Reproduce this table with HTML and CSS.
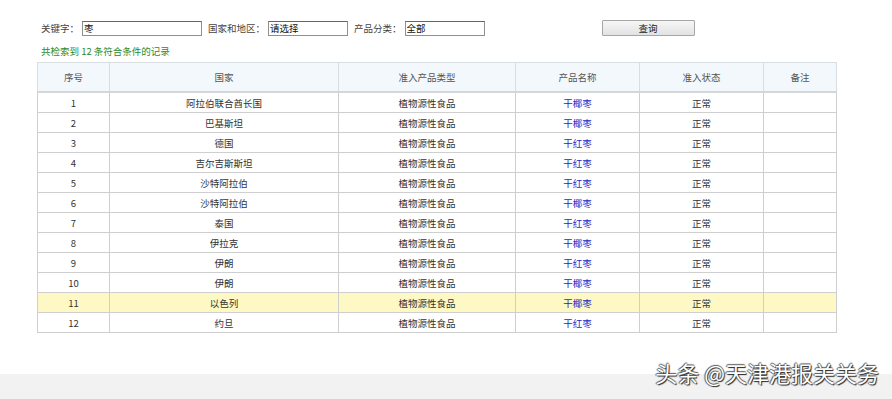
FILE: index.html
```html
<!DOCTYPE html>
<html lang="zh-CN">
  <head>
    <meta charset="UTF-8" />
    <title>准入产品查询</title>
    <link rel="stylesheet" href="styles.css">
  </head>
  <body>
    <div class="page">
      <div class="search-bar">
        <label>关键字：</label>
        <input class="field field-key" type="text" value="枣" />
        <label>国家和地区：</label>
        <input class="field" type="text" value="请选择" />
        <label>产品分类：</label>
        <input class="field" type="text" value="全部" />
        <button class="search-button">查询</button>
      </div>
      <div class="summary">共检索到 12 条符合条件的记录</div>

      <table class="result-table">
        <thead>
          <tr>
            <th class="col-no">序号</th>
            <th class="col-country">国家</th>
            <th class="col-type">准入产品类型</th>
            <th class="col-name">产品名称</th>
            <th class="col-state">准入状态</th>
            <th class="col-note">备注</th>
          </tr>
        </thead>
        <tbody>
          <tr><td>1</td><td>阿拉伯联合酋长国</td><td>植物源性食品</td><td><a href="#">干椰枣</a></td><td>正常</td><td></td></tr>
          <tr><td>2</td><td>巴基斯坦</td><td>植物源性食品</td><td><a href="#">干椰枣</a></td><td>正常</td><td></td></tr>
          <tr><td>3</td><td>德国</td><td>植物源性食品</td><td><a href="#">干红枣</a></td><td>正常</td><td></td></tr>
          <tr><td>4</td><td>吉尔吉斯斯坦</td><td>植物源性食品</td><td><a href="#">干红枣</a></td><td>正常</td><td></td></tr>
          <tr><td>5</td><td>沙特阿拉伯</td><td>植物源性食品</td><td><a href="#">干红枣</a></td><td>正常</td><td></td></tr>
          <tr><td>6</td><td>沙特阿拉伯</td><td>植物源性食品</td><td><a href="#">干椰枣</a></td><td>正常</td><td></td></tr>
          <tr><td>7</td><td>泰国</td><td>植物源性食品</td><td><a href="#">干红枣</a></td><td>正常</td><td></td></tr>
          <tr><td>8</td><td>伊拉克</td><td>植物源性食品</td><td><a href="#">干椰枣</a></td><td>正常</td><td></td></tr>
          <tr><td>9</td><td>伊朗</td><td>植物源性食品</td><td><a href="#">干红枣</a></td><td>正常</td><td></td></tr>
          <tr><td>10</td><td>伊朗</td><td>植物源性食品</td><td><a href="#">干椰枣</a></td><td>正常</td><td></td></tr>
          <tr class="hover"><td>11</td><td>以色列</td><td>植物源性食品</td><td><a href="#">干椰枣</a></td><td>正常</td><td></td></tr>
          <tr><td>12</td><td>约旦</td><td>植物源性食品</td><td><a href="#">干红枣</a></td><td>正常</td><td></td></tr>
        </tbody>
      </table>
    </div>

    <div class="footer">
      <span class="watermark">头条 @天津港报关关务</span>
    </div>
  </body>
</html>
```

FILE: styles.css
```css
body {
  margin: 0;
  font-family: "Noto Sans CJK SC", "Liberation Sans", sans-serif;
  font-size: 9.5px;
  color: #333;
  background-color: white;
}
.page {
  height: 374px;
  padding: 20px 0 0 37px;
  box-sizing: border-box;
}
.search-bar {
  display: flex;
  align-items: center;
  height: 16px;
  padding-left: 4px;
}
.search-bar label {
  color: #444;
  margin-right: 3px;
}
.field {
  width: 80px;
  height: 15px;
  box-sizing: border-box;
  margin: 0 6px 0 0;
  padding: 0 1px;
  border: 1px solid #8f8f8f;
  border-top-color: #666;
  font-family: inherit;
  font-size: 9.5px;
  color: #111;
}
.field-key {
  width: 120px;
}
.search-button {
  width: 93px;
  height: 16px;
  margin-left: 111px;
  padding: 0;
  border: 1px solid #a6a6a6;
  border-radius: 1px;
  background: linear-gradient(#f6f6f6, #e2e2e2);
  font-family: inherit;
  font-size: 9.5px;
  color: #222;
}
.summary {
  margin: 8px 0 0 4px;
  height: 18px;
  color: #2a8a2a;
}
.result-table {
  border-collapse: collapse;
  width: 799px;
  table-layout: fixed;
}
.result-table th,
.result-table td {
  border: 1px solid #cfcfcf;
  text-align: center;
  padding: 0;
  font-weight: normal;
}
.result-table th {
  height: 28px;
  background-color: #f3f8fc;
  color: #555;
  border-color: #d8dde2;
  border-bottom: 2px solid #d4d7da;
}
.result-table td {
  height: 19px;
  color: #333;
}
.result-table tr.hover td {
  background-color: #fdf8c4;
}
.result-table a {
  color: #2626c8;
  text-decoration: none;
}
.col-no { width: 71px; }
.col-country { width: 228px; }
.col-type { width: 176px; }
.col-name { width: 123px; }
.col-state { width: 123px; }
.col-note { width: 72px; }
.footer {
  position: relative;
  height: 25px;
  background-color: #f2f2f2;
}
.watermark {
  position: absolute;
  right: 13px;
  bottom: 11px;
  font-size: 22px;
  color: white;
  text-shadow: 1px 1px 1px #222, -1px 0 1px #555, 0 -1px 1px #555;
}
```
